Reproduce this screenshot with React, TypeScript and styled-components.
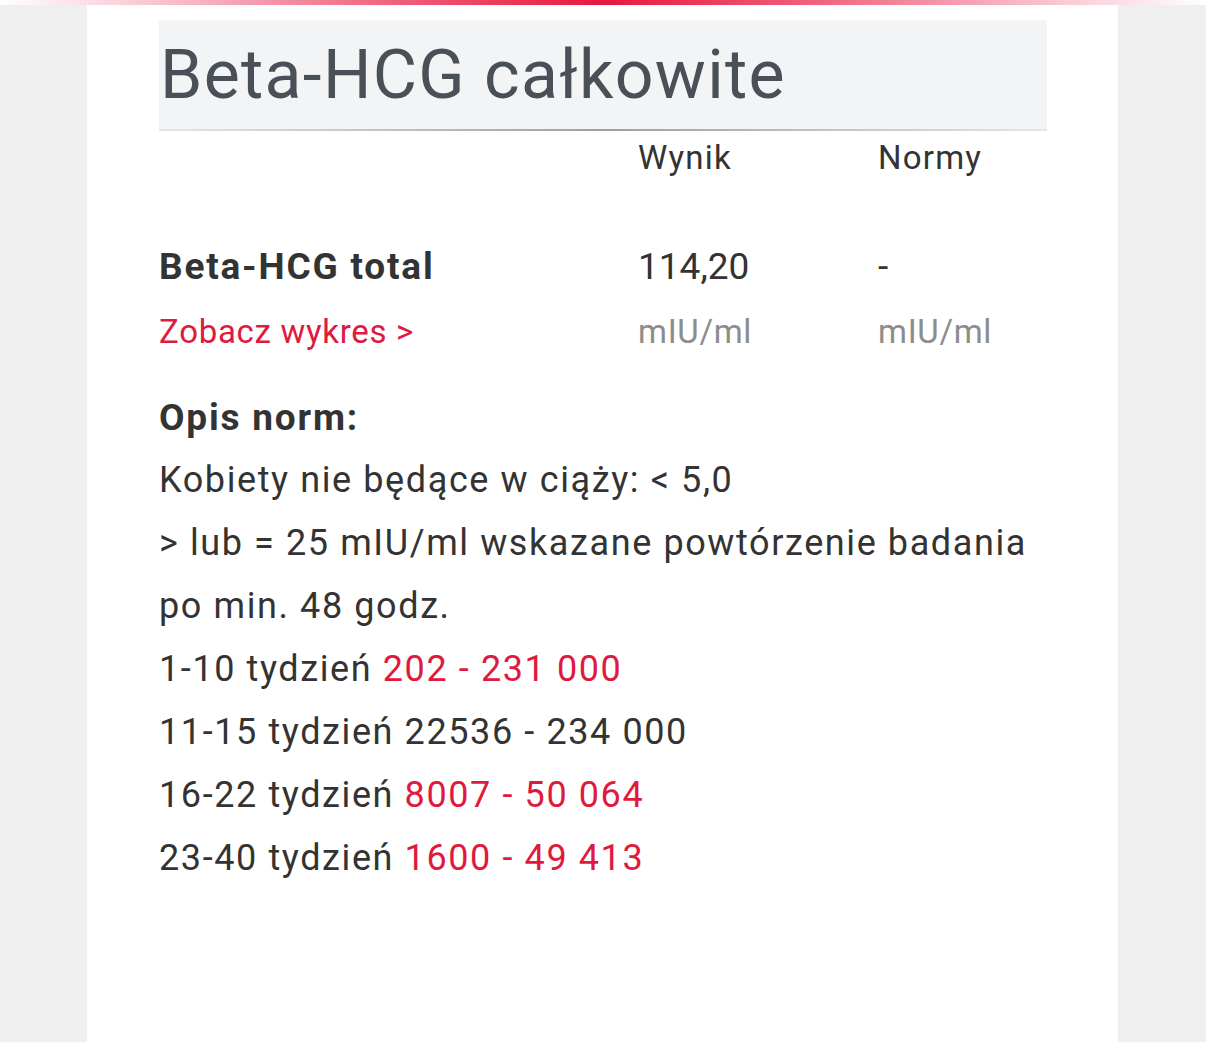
import React from "react";
import styled, { createGlobalStyle } from "styled-components";

const GlobalStyle = createGlobalStyle`
  html, body {
    margin: 0;
    padding: 0;
    background: #efefef;
  }
  body {
    font-family: Roboto, "Liberation Sans", sans-serif;
    color: #333;
  }
`;

const ranges = [
  { label: "1-10 tydzień", value: "202 - 231 000", red: true },
  { label: "11-15 tydzień", value: "22536 - 234 000", red: false },
  { label: "16-22 tydzień", value: "8007 - 50 064", red: true },
  { label: "23-40 tydzień", value: "1600 - 49 413", red: true },
];

const App: React.FC = () => {
  return (
    <>
      <GlobalStyle />
      <TopBar />
      <Card>
        <TitleBox>
          <h1>Beta-HCG całkowite</h1>
        </TitleBox>

        <ResultTable>
          <span />
          <HeadCell>Wynik</HeadCell>
          <HeadCell>Normy</HeadCell>

          <TestName>Beta-HCG total</TestName>
          <Value>114,20</Value>
          <Value>-</Value>

          <ChartLink href="#">Zobacz wykres &gt;</ChartLink>
          <Unit>mIU/ml</Unit>
          <Unit>mIU/ml</Unit>
        </ResultTable>

        <Description>
          <DescTitle>Opis norm:</DescTitle>
          <Line>Kobiety nie będące w ciąży: &lt; 5,0</Line>
          <Line>&gt; lub = 25 mIU/ml wskazane powtórzenie badania</Line>
          <Line>po min. 48 godz.</Line>
          {ranges.map((r) => (
            <Line key={r.label}>
              {r.label} <Range red={r.red}>{r.value}</Range>
            </Line>
          ))}
        </Description>
      </Card>
    </>
  );
};

const TopBar = styled.div`
  height: 5px;
  background: linear-gradient(
    90deg,
    #ffffff 0%,
    #f9c9d3 12%,
    #ef5a77 34%,
    #e8173f 50%,
    #ef5a77 66%,
    #f9c9d3 88%,
    #ffffff 100%
  );
`;

const Card = styled.main`
  background: #fff;
  margin: 0 88px 0 87px;
  min-height: 1037px;
  padding: 15px 71px 0 72px;
  box-sizing: border-box;
`;

const TitleBox = styled.div`
  height: 111px;
  display: flex;
  align-items: center;
  padding: 0 0 2px 1px;
  box-sizing: border-box;
  background: linear-gradient(90deg, #e4e6e8, #9ba0a6 50%, #e4e6e8) bottom / 100% 2px
      no-repeat,
    #f3f4f5;

  h1 {
    margin: 0;
    font-size: 68px;
    font-weight: 400;
    color: #4a5058;
    letter-spacing: 1.3px;
  }
`;

const ResultTable = styled.div`
  display: grid;
  grid-template-columns: 479px 240px 1fr;
  margin-top: 2px;
`;

const HeadCell = styled.span`
  font-size: 33px;
  line-height: 50px;
  letter-spacing: 1.2px;
  color: #333;
`;

const TestName = styled.span`
  margin-top: 54px;
  font-size: 37px;
  font-weight: 700;
  line-height: 60px;
  letter-spacing: 1.8px;
  color: #333;
`;

const Value = styled.span`
  margin-top: 54px;
  font-size: 37px;
  line-height: 60px;
  color: #333;
`;

const ChartLink = styled.a`
  font-size: 33px;
  line-height: 70px;
  letter-spacing: 0.7px;
  color: #e0193e;
  text-decoration: none;
`;

const Unit = styled.span`
  font-size: 33px;
  line-height: 70px;
  letter-spacing: 0.7px;
  color: #8c8c8c;
`;

const Description = styled.section`
  margin-top: 19px;
`;

const DescTitle = styled.div`
  font-size: 37px;
  font-weight: 700;
  line-height: 63px;
  letter-spacing: 1.8px;
  color: #333;
`;

const Line = styled.div`
  font-size: 36px;
  line-height: 63px;
  letter-spacing: 1.6px;
  color: #333;
`;

const Range = styled.span<{ red: boolean }>`
  color: ${(p) => (p.red ? "#e0193e" : "inherit")};
`;

export default App;
